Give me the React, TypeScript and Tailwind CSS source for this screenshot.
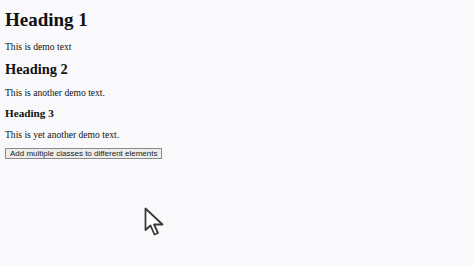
export default function App() {
  return (
    <div className="w-[474px] h-[266px] bg-[#f9f9fb] overflow-hidden relative">
      <div className="flex flex-col items-start px-[5px] text-[#111] font-['Liberation_Serif',serif]">
        <h1 className="mt-[9px] text-[19px] leading-[22px] font-bold">Heading 1</h1>
        <p className="mt-[10px] text-[9.6px] leading-[11px]">This is demo text</p>
        <h2 className="mt-[9px] text-[14.4px] leading-[17px] font-bold">Heading 2</h2>
        <p className="mt-[9px] text-[9.6px] leading-[11px]">This is another demo text.</p>
        <h3 className="mt-[9px] text-[11.2px] leading-[13px] font-bold">Heading 3</h3>
        <p className="mt-[9px] text-[9.6px] leading-[11px]">This is yet another demo text.</p>
        <button className="mt-[8px] h-[11px] px-[4px] flex items-center border border-[#8a8a8a] bg-[#ececec] text-[8px] leading-none text-[#222] font-['Liberation_Sans',sans-serif]">
          Add multiple classes to different elements
        </button>
      </div>
      {/* mouse pointer */}
      <svg className="absolute left-[143px] top-[206px]" width="26" height="32" viewBox="0 0 26 32">
        <path
          d="M2.5 2.5 L2.5 24 L7.5 19.5 L11.5 28.5 L15 27 L11 18.5 L19.5 18.5 Z"
          fill="#fff"
          stroke="#3a3a3a"
          strokeWidth="1.8"
          strokeLinejoin="round"
        />
      </svg>
    </div>
  );
}
